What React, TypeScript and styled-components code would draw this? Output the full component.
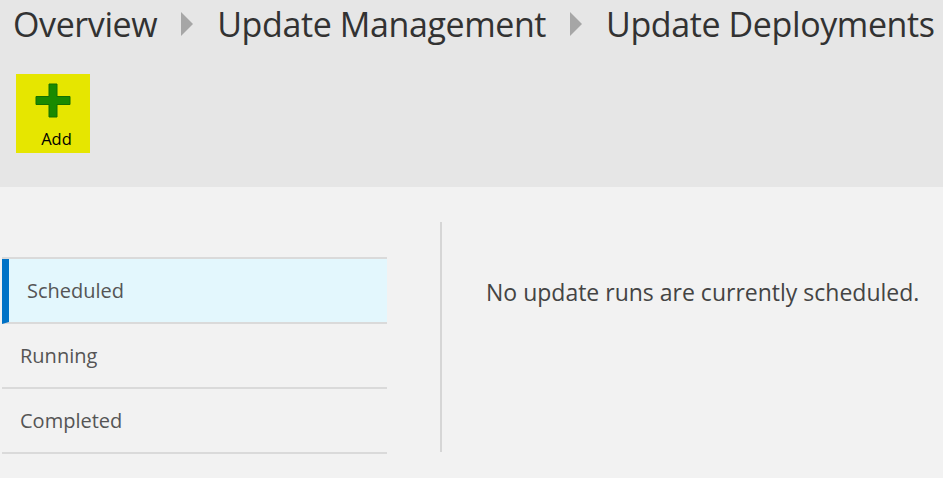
import React from "react";
import styled, { createGlobalStyle } from "styled-components";

const Global = createGlobalStyle`
  html, body { margin: 0; padding: 0; background: #f2f2f2; }
  body { font-family: "Open Sans", "Noto Sans", sans-serif; }
`;

const Page = styled.div`
  width: 943px;
  height: 478px;
  overflow: hidden;
  background: #f2f2f2;
`;

const Header = styled.header`
  height: 187px;
  background: #e6e6e6;
  box-sizing: border-box;
  padding: 0 0 0 13px;
`;

const Breadcrumb = styled.nav`
  display: flex;
  align-items: center;
  height: 48px;
  gap: 24px;
`;

const Crumb = styled.span`
  font-size: 34px;
  color: #323232;
  letter-spacing: -0.4px;
  line-height: 48px;
  white-space: nowrap;
`;

const Chevron = styled.span`
  width: 0;
  height: 0;
  border-top: 12px solid transparent;
  border-bottom: 12px solid transparent;
  border-left: 12px solid #a6a6a6;
`;

const Toolbar = styled.div`
  display: flex;
  padding: 26px 0 0 3px;
`;

const AddButton = styled.button`
  width: 74px;
  height: 79px;
  background: #e6e600;
  border: none;
  padding: 9px 0 0;
  display: flex;
  flex-direction: column;
  align-items: center;
  font-family: "Open Sans", sans-serif;
  font-size: 16.5px;
  color: #000;
  cursor: pointer;
`;

const AddLabel = styled.span`
  margin-top: 9px;
  padding-left: 7px;
  line-height: 22px;
`;

const Main = styled.main`
  display: flex;
  padding: 35px 0 0 2px;
`;

const TabList = styled.ul`
  list-style: none;
  margin: 35px 0 0;
  padding: 0;
  width: 385px;
  border-top: 2px solid #dadada;
`;

const Tab = styled.li<{ $active?: boolean }>`
  height: 63px;
  border-bottom: 2px solid #dadada;
  border-left: ${(p) => (p.$active ? "7px solid #0072c6" : "none")};
  background: ${(p) => (p.$active ? "#e3f7fd" : "transparent")};
  display: flex;
  align-items: center;
  padding-left: 18px;
  font-size: 20px;
  color: #555;
`;

const Divider = styled.div`
  width: 2px;
  height: 230px;
  background: #d6d6d6;
  margin-left: 53px;
`;

const Content = styled.section`
  padding: 54px 0 0 44px;
  font-size: 23px;
  color: #444;
  white-space: nowrap;
`;

const PlusIcon = () => (
  <svg width="36" height="36" viewBox="0 0 36 36">
    <path
      d="M13 1h8v12.5h13v8H21V34h-8V21.5H0v-8h13z"
      fill="#1a8a00"
      stroke="#137000"
      strokeWidth="1"
      transform="translate(1 0)"
    />
  </svg>
);

export default function App() {
  return (
    <Page>
      <Global />
      <Header>
        <Breadcrumb>
          <Crumb>Overview</Crumb>
          <Chevron />
          <Crumb>Update Management</Crumb>
          <Chevron />
          <Crumb>Update Deployments</Crumb>
        </Breadcrumb>
        <Toolbar>
          <AddButton>
            <PlusIcon />
            <AddLabel>Add</AddLabel>
          </AddButton>
        </Toolbar>
      </Header>
      <Main>
        <TabList>
          <Tab $active>Scheduled</Tab>
          <Tab>Running</Tab>
          <Tab>Completed</Tab>
        </TabList>
        <Divider />
        <Content>No update runs are currently scheduled.</Content>
      </Main>
    </Page>
  );
}
